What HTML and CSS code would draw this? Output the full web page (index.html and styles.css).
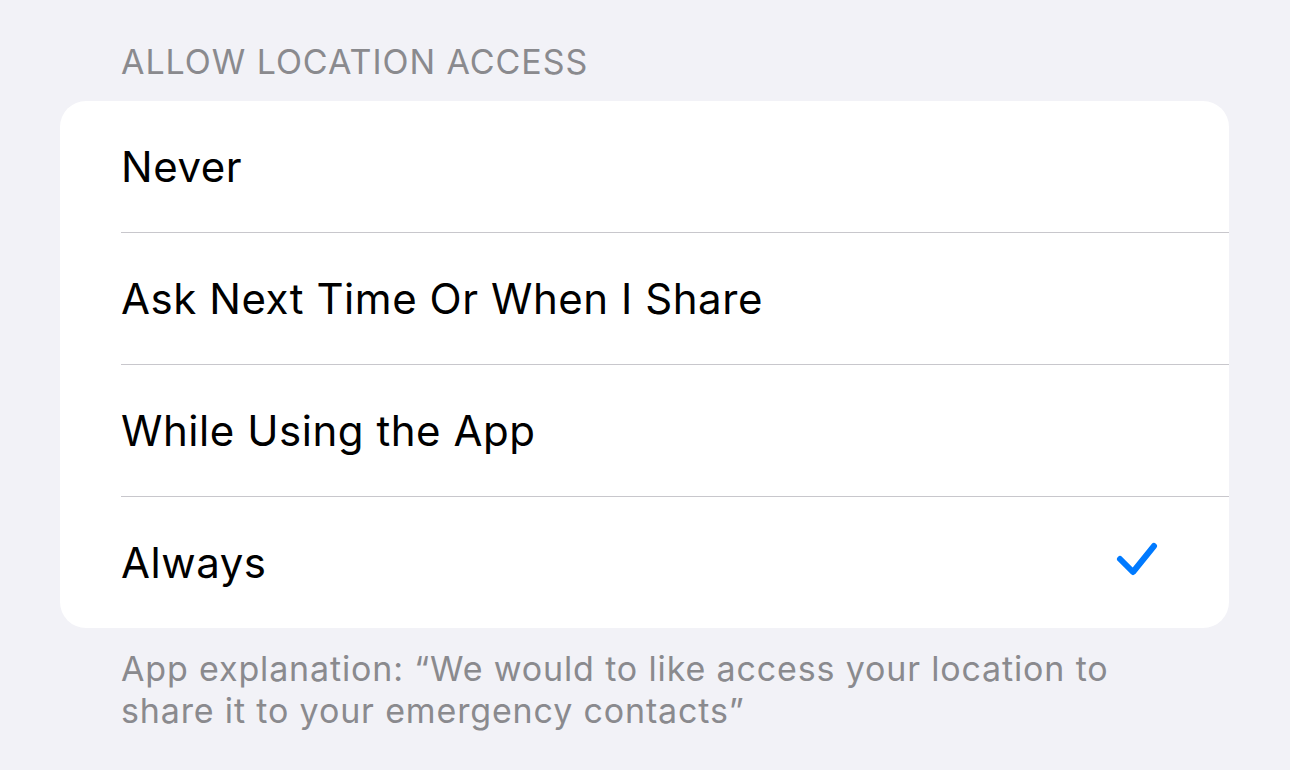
FILE: index.html
```html
<!DOCTYPE html>
<html>
<head>
<meta charset="utf-8">
<link rel="stylesheet" href="styles.css">
</head>
<body>
<section class="group">
  <h2 class="group-header">ALLOW LOCATION ACCESS</h2>
  <ul class="card">
    <li class="row"><span class="label">Never</span></li>
    <li class="row"><span class="label">Ask Next Time Or When I Share</span></li>
    <li class="row"><span class="label">While Using the App</span></li>
    <li class="row selected"><span class="label">Always</span>
      <svg class="check" width="44" height="44" viewBox="0 0 44 44"><path d="M5 18 L18 31 L39 5" fill="none" stroke="#007aff" stroke-width="6" stroke-linecap="round" stroke-linejoin="round"/></svg>
    </li>
  </ul>
  <p class="group-footer">App explanation: “We would to like access your location to share it to your emergency contacts”</p>
</section>
</body>
</html>
```
FILE: styles.css
```css
html, body {
  margin: 0;
  padding: 0;
  background: #f2f2f7;
}
body {
  width: 1290px;
  height: 770px;
  overflow: hidden;
  font-family: Inter, "Noto Sans", sans-serif;
}
.group {
  padding: 40px 61px 0 60px;
}
.group-header {
  margin: 0 0 0 61px;
  height: 61px;
  font-size: 34px;
  font-weight: 400;
  letter-spacing: 0.95px;
  color: #8a8a8e;
  line-height: 44px;
}
.card {
  list-style: none;
  margin: 0;
  padding: 0;
  background: #ffffff;
  border-radius: 26px;
  overflow: hidden;
}
.row {
  height: 131px;
  margin-left: 61px;
  padding-right: 70px;
  display: flex;
  align-items: center;
  justify-content: space-between;
  border-bottom: 1px solid #c8c7cc;
}
.row:last-child {
  border-bottom: none;
}
.label {
  font-size: 42px;
  letter-spacing: 0.55px;
  color: #000;
}
.check {
  display: block;
}
.group-footer {
  margin: 20px 0 0 61px;
  font-size: 34px;
  letter-spacing: 0.85px;
  line-height: 42px;
  color: #8a8a8e;
  max-width: 1040px;
}
```
